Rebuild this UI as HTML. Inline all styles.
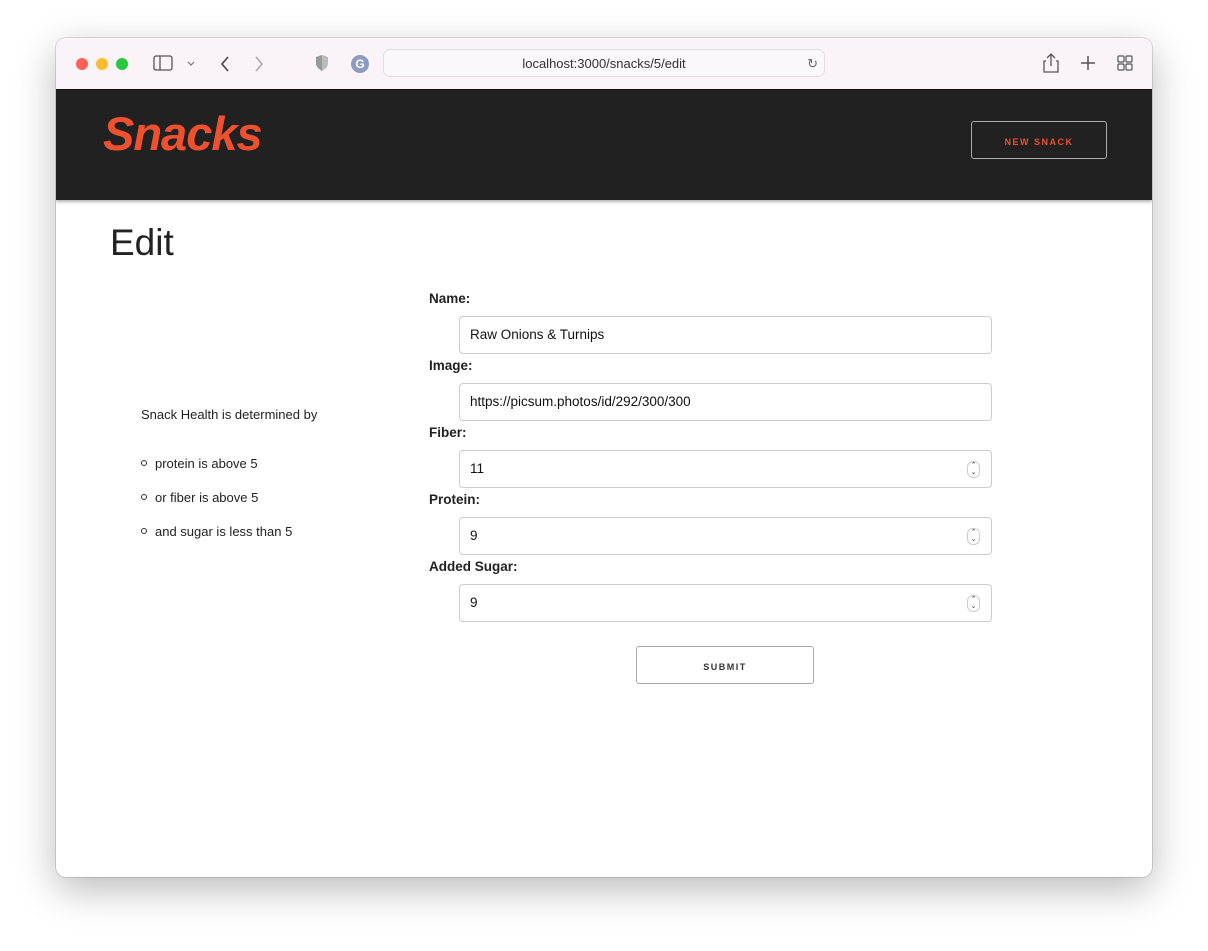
<!DOCTYPE html>
<html><head><style>
*{box-sizing:border-box;margin:0;padding:0}
body{width:1208px;height:951px;background:#fff;position:relative;font-family:"Liberation Sans",sans-serif;overflow:hidden}
.win{position:absolute;left:56px;top:38px;width:1096px;height:839px;border-radius:10px;background:#fff;box-shadow:0 12px 40px rgba(0,0,0,.28),0 0 0 1px rgba(0,0,0,.12);overflow:hidden}
.tb{position:absolute;left:0;top:0;width:100%;height:52px;background:#faf4f8;border-bottom:1px solid #111}
.dot{position:absolute;top:20px;width:12px;height:12px;border-radius:50%}
.url{position:absolute;left:327px;top:11px;width:442px;height:28px;border:1px solid #e2dde0;border-radius:7px;background:#fbf7fa;text-align:center;font-size:13px;line-height:28px;color:#333}
.hd{position:absolute;left:0;top:52px;width:100%;height:110px;background:#212121;box-shadow:0 2px 3px rgba(0,0,0,.3)}
.logo{position:absolute;left:47px;top:16px;font:italic bold 47px "Liberation Sans",sans-serif;color:#ee5130;letter-spacing:-1px}
.nb{position:absolute;left:915px;top:31px;width:136px;height:38px;border:1px solid #aaa;border-radius:3px;color:#ee5130;font-size:9px;font-weight:bold;letter-spacing:1.5px;text-align:center;line-height:40px}
h1{position:absolute;left:54px;top:184px;font-weight:normal;font-size:37px;color:#222}
.side{position:absolute;font-size:13px;color:#222}
.circ{position:absolute;left:85px;width:6px;height:6px;border:1px solid #333;border-radius:50%}
.lbl{position:absolute;left:373px;font-size:13.5px;font-weight:bold;color:#222}
.inp{position:absolute;left:403px;width:533px;height:38px;border:1px solid #ccc;border-radius:4px;font-size:13.5px;line-height:36px;padding-left:10px;color:#111}
.sp{position:absolute;right:11px;top:10px;width:13px;height:17px;border:1px solid #ccc;border-radius:6px;font-size:7px;line-height:7px;text-align:center;color:#333}
.sub{position:absolute;left:580px;top:608px;width:178px;height:38px;border:1px solid #aaa;border-radius:3px;font-size:9px;font-weight:bold;letter-spacing:1.5px;text-align:center;line-height:40px;color:#333}
</style></head><body>
<div class="win">
<div class="tb">
<div class="dot" style="left:20px;background:#fe5f57"></div>
<div class="dot" style="left:40px;background:#febc2e"></div>
<div class="dot" style="left:60px;background:#28c840"></div>
<svg style="position:absolute;left:97px;top:17px" width="60" height="18"><rect x="1" y="1" width="18" height="14" rx="2" fill="none" stroke="#555" stroke-width="1.3"/><line x1="7" y1="1" x2="7" y2="15" stroke="#555" stroke-width="1.3"/><path d="M35 7l3 3 3-3" fill="none" stroke="#777" stroke-width="1.2"/></svg>
<svg style="position:absolute;left:160px;top:16px" width="60" height="20"><path d="M12 3l-6 7 6 7" fill="none" stroke="#444" stroke-width="1.6"/><path d="M40 3l6 7-6 7" fill="none" stroke="#aaa" stroke-width="1.6"/></svg>
<svg style="position:absolute;left:258px;top:16px" width="16" height="18"><path d="M8 1l6 2v6c0 4-3 6-6 8-3-2-6-4-6-8V3z" fill="#bbb"/><path d="M8 1v16c-3-2-6-4-6-8V3z" fill="#999"/></svg>
<div style="position:absolute;left:295px;top:17px;width:18px;height:18px;border-radius:50%;background:#8e9bbf;color:#fff;font-size:12px;font-weight:bold;text-align:center;line-height:18px">G</div>
<div class="url">localhost:3000/snacks/5/edit<span style="position:absolute;right:6px;top:0;color:#666">↻</span></div>
<svg style="position:absolute;left:985px;top:14px" width="100" height="22"><path d="M5 9H3v11h14V9h-2M10 2v12M6 6l4-4 4 4" fill="none" stroke="#555" stroke-width="1.3"/><path d="M47 4v14M40 11h14" stroke="#555" stroke-width="1.5"/><g fill="none" stroke="#555" stroke-width="1.2"><rect x="77" y="4" width="6" height="6" rx="1"/><rect x="85" y="4" width="6" height="6" rx="1"/><rect x="77" y="12" width="6" height="6" rx="1"/><rect x="85" y="12" width="6" height="6" rx="1"/></g></svg>
</div>
<div class="hd"><div class="logo">Snacks</div><div class="nb">NEW SNACK</div></div>
<h1>Edit</h1>
<div class="side" style="left:85px;top:369px">Snack Health is determined by</div>
<div class="circ" style="top:422px"></div><div class="side" style="left:99px;top:418px">protein is above 5</div>
<div class="circ" style="top:456px"></div><div class="side" style="left:99px;top:452px">or fiber is above 5</div>
<div class="circ" style="top:490px"></div><div class="side" style="left:99px;top:486px">and sugar is less than 5</div>
<div class="lbl" style="top:253px">Name:</div>
<div class="inp" style="top:278px">Raw Onions &amp; Turnips</div>
<div class="lbl" style="top:320px">Image:</div>
<div class="inp" style="top:345px">https://picsum.photos/id/292/300/300</div>
<div class="lbl" style="top:387px">Fiber:</div>
<div class="inp" style="top:412px">11<div class="sp">⌃<br>⌄</div></div>
<div class="lbl" style="top:454px">Protein:</div>
<div class="inp" style="top:479px">9<div class="sp">⌃<br>⌄</div></div>
<div class="lbl" style="top:521px">Added Sugar:</div>
<div class="inp" style="top:546px">9<div class="sp">⌃<br>⌄</div></div>
<div class="sub">SUBMIT</div>
</div>
</body></html>
